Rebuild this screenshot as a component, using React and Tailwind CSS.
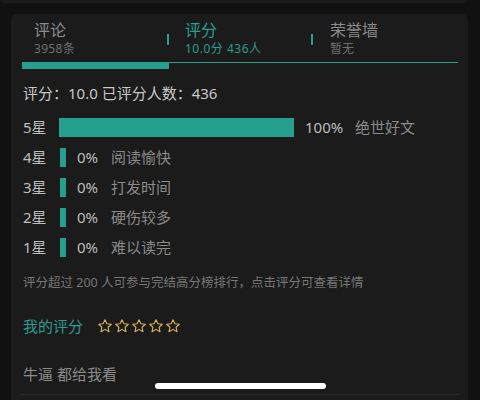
import React from 'react';

const rows = [
  { star: '5星', pct: 100, label: '绝世好文' },
  { star: '4星', pct: 0, label: '阅读愉快' },
  { star: '3星', pct: 0, label: '打发时间' },
  { star: '2星', pct: 0, label: '硬伤较多' },
  { star: '1星', pct: 0, label: '难以读完' },
];

const Star = () => (
  <svg width="16" height="16" viewBox="0 0 24 24" fill="none" stroke="#d9b45a" strokeWidth="1.6" strokeLinejoin="round">
    <path d="M12 2.5l2.9 6.2 6.6.7-4.9 4.5 1.4 6.6L12 17.1l-6 3.4 1.4-6.6-4.9-4.5 6.6-.7z" />
  </svg>
);

const App = () => {
  return (
    <div
      className="w-[480px] h-[400px] bg-[#111111] overflow-hidden relative"
      style={{ fontFamily: '"Noto Sans", "Noto Sans CJK SC", sans-serif' }}
    >
      <div className="w-[467px] h-[3px] bg-[#1b1b1b] rounded-b-md" />
      <div className="ml-[11px] mt-[11px] w-[457px] h-[400px] bg-[#1b1b1b] rounded-md">
        {/* tabs */}
        <div className="flex pt-[5px] pl-[23px]">
          <div className="w-[135px] flex items-center">
            <div className="flex-1">
              <div className="text-[16px] leading-[22px] text-[#8a8a8a]">评论</div>
              <div className="text-[12px] leading-[16px] text-[#6f6f6f] tracking-[0.3px]">3958条</div>
            </div>
            <div className="w-[2px] h-[11px] bg-[#2a9d8f] mt-[2px]" />
          </div>
          <div className="w-[144px] pl-[16px] flex items-center">
            <div className="flex-1">
              <div className="text-[16px] leading-[22px] text-[#2a9d8f]">评分</div>
              <div className="text-[12px] leading-[16px] text-[#2a9d8f] tracking-[0.5px]">10.0分 436人</div>
            </div>
            <div className="w-[2px] h-[11px] bg-[#2a9d8f] mt-[2px]" />
          </div>
          <div className="pl-[17px]">
            <div className="text-[16px] leading-[22px] text-[#8a8a8a]">荣誉墙</div>
            <div className="text-[12px] leading-[16px] text-[#6f6f6f]">暂无</div>
          </div>
        </div>
        <div className="ml-[11px] mt-[5px] w-[436px] flex items-start">
          <div className="w-[147px] h-[7px] bg-[#26a08e]" />
          <div className="flex-1 h-px bg-[#26a08e]" />
        </div>

        <div className="pl-[12px] mt-[14px] text-[15px] leading-[20px] text-[#c8c8c8]">
          评分：10.0 已评分人数：436
        </div>

        <div className="pl-[12px] mt-[9px] flex flex-col">
          {rows.map((r) => (
            <div key={r.star} className="h-[30px] flex items-center text-[15px] text-[#bdbdbd]">
              <span className="w-[36px]">{r.star}</span>
              {r.pct > 0 ? (
                <div className="w-[235px] h-[19px] bg-[#26a08e]" />
              ) : (
                <div className="w-[6px] h-[19px] bg-[#26a08e] ml-px" />
              )}
              <span className={r.pct > 0 ? 'ml-[11px] w-[50px]' : 'ml-[11px] w-[34px]'}>{r.pct}%</span>
              <span className="text-[#8a8a8a]">{r.label}</span>
            </div>
          ))}
        </div>

        <div className="pl-[12px] mt-[12px] text-[12.5px] leading-[18px] text-[#777777]">
          评分超过 200 人可参与完结高分榜排行，点击评分可查看详情
        </div>

        <div className="pl-[12px] mt-[23px] flex items-center">
          <span className="text-[15px] leading-[22px] text-[#2a9d8f]">我的评分</span>
          <div className="ml-[14px] flex gap-px">
            <Star />
            <Star />
            <Star />
            <Star />
            <Star />
          </div>
        </div>

        <div className="pl-[12px] mt-[27px] text-[15px] leading-[20px] text-[#8a8a8a]">
          牛逼 都给我看
        </div>
        <div className="ml-[8px] mt-[10px] w-[440px] h-px bg-[#262626]" />
      </div>
      <div className="absolute left-[155px] top-[383px] w-[171px] h-[6px] bg-white rounded-full" />
    </div>
  );
};

export default App;
